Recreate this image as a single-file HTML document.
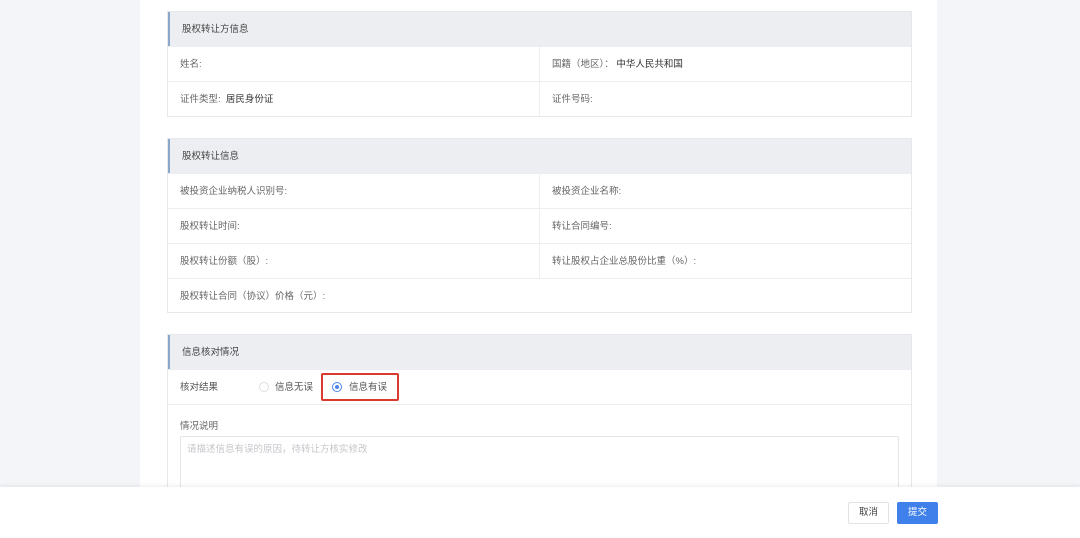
<!DOCTYPE html>
<html><head><meta charset="utf-8"><style>
*{box-sizing:border-box;margin:0;padding:0}
body{width:1080px;height:538px;overflow:hidden;background:#f4f5f8;font-family:"Liberation Sans","Noto Sans CJK SC",sans-serif;font-size:9.5px;color:#555;position:relative}
.card{position:absolute;left:140px;top:0;width:797px;height:538px;background:#fff}
.sec{position:absolute;left:167px;width:745px;border:1px solid #e6e8ec;background:#fff}
.hd{height:34px;background:#eceef2;border-left:2px solid #8aa6c8;padding-left:12px;line-height:35px;color:#444}
.row{height:35px;border-top:1px solid #eceef1;display:flex}
.row div{flex:1;padding-left:12px;line-height:36px;color:#666}
.row div+div{border-left:1px solid #eceef1}
b{font-weight:normal;color:#333}
</style></head><body>
<div class="card"></div>
<div class="sec" style="top:11px;height:106px"><div class="hd">股权转让方信息</div>
<div class="row"><div>姓名:</div><div>国籍（地区）： <b>中华人民共和国</b></div></div>
<div class="row"><div>证件类型: &nbsp;<b>居民身份证</b></div><div>证件号码:</div></div></div>
<div class="sec" style="top:138px;height:175px"><div class="hd">股权转让信息</div>
<div class="row"><div>被投资企业纳税人识别号:</div><div>被投资企业名称:</div></div>
<div class="row"><div>股权转让时间:</div><div>转让合同编号:</div></div>
<div class="row"><div>股权转让份额（股）:</div><div>转让股权占企业总股份比重（%）:</div></div>
<div class="row"><div>股权转让合同（协议）价格（元）:</div></div></div>
<div class="sec" style="top:334px;height:204px;border-bottom:none"><div class="hd">信息核对情况</div>
<div class="row"><div style="position:relative;color:#555">核对结果
<span style="position:absolute;left:91px;top:12px;width:10px;height:10px;border:1px solid #ddd;border-radius:50%"></span>
<span style="position:absolute;left:107px;color:#555">信息无误</span>
<span style="position:absolute;left:164px;top:12px;width:10px;height:10px;border:1px solid #4a86e8;border-radius:50%"><i style="position:absolute;left:2px;top:2px;width:4px;height:4px;background:#4a86e8;border-radius:50%"></i></span>
<span style="position:absolute;left:181px;color:#555">信息有误</span>
<span style="position:absolute;left:153px;top:3px;width:78px;height:28px;border:2px solid #d93a2b;border-radius:2px"></span>
</div></div>
<div style="border-top:1px solid #eceef1;padding:13px 0 0 12px;color:#666">情况说明</div>
<div style="position:absolute;left:12px;top:101px;width:719px;height:80px;border:1px solid #e3e5e9;border-radius:2px;padding:4px 6px;color:#c4c6ca">请描述信息有误的原因，待转让方核实修改</div>
</div>
<div style="position:absolute;left:0;top:487px;width:1080px;height:51px;background:#fff;box-shadow:0 -2px 4px rgba(0,0,0,.06)"></div>
<div style="position:absolute;left:848px;top:502px;width:41px;height:22px;border:1px solid #e2e2e2;border-radius:2px;text-align:center;line-height:20px;color:#444;background:#fff">取消</div>
<div style="position:absolute;left:897px;top:502px;width:41px;height:22px;border-radius:2px;text-align:center;line-height:22px;color:#fff;background:#3f80ea">提交</div>
</body></html>
